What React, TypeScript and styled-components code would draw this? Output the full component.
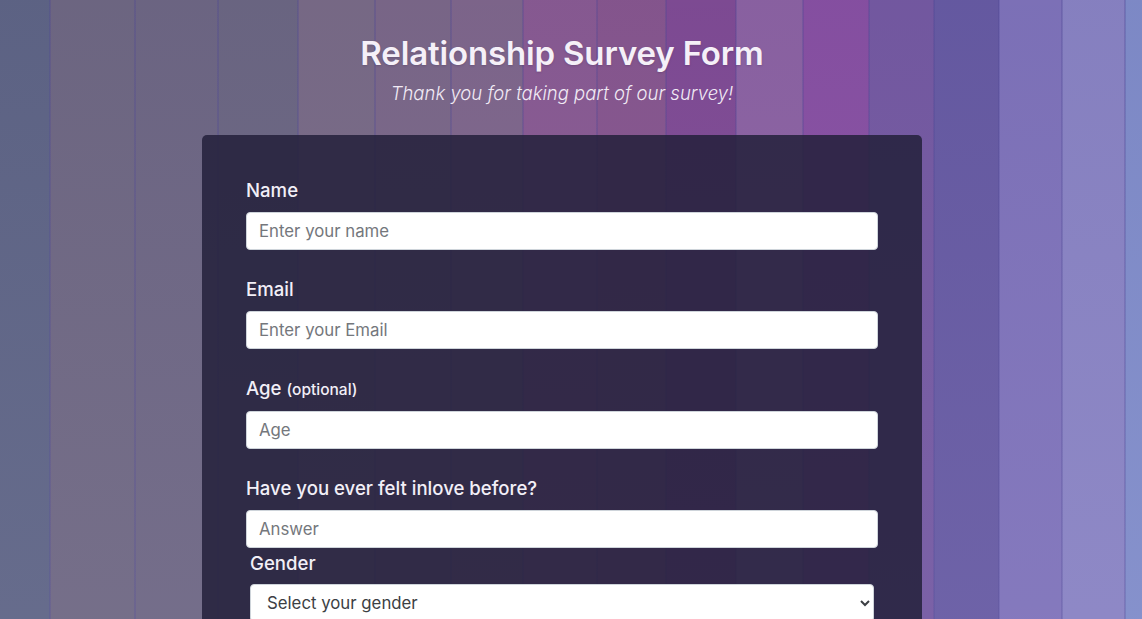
import React from "react";
import styled, { createGlobalStyle } from "styled-components";

const stripes: [number, string][] = [
  [50, "#5e6486"],
  [135, "#6e6783"],
  [218, "#6d6684"],
  [298, "#6b6683"],
  [375, "#786a87"],
  [451, "#7a6789"],
  [523, "#7e668c"],
  [597, "#885a93"],
  [666, "#86568f"],
  [736, "#7f4b95"],
  [803, "#8b62a3"],
  [869, "#8750a3"],
  [934, "#7459a2"],
  [999, "#665aa3"],
  [1062, "#7e72ba"],
  [1125, "#8882c3"],
  [1142, "#7f8bc9"],
];

const stripeGradient = (() => {
  let prev = 0;
  const stops = stripes.map(([end, color]) => {
    const s = `${color} ${prev}px ${end}px`;
    prev = end;
    return s;
  });
  return `linear-gradient(90deg, ${stops.join(", ")})`;
})();

const lineGradient = (() => {
  let prev = 0;
  const stops: string[] = [];
  stripes.slice(0, -1).forEach(([end]) => {
    stops.push(`transparent ${prev}px ${end - 1}px`);
    stops.push(`rgba(78, 70, 150, 0.3) ${end - 1}px ${end + 1}px`);
    prev = end + 1;
  });
  stops.push(`transparent ${prev}px 1142px`);
  return `linear-gradient(90deg, ${stops.join(", ")})`;
})();

const GlobalStyle = createGlobalStyle`
  * { box-sizing: border-box; }
  html, body { margin: 0; padding: 0; }
  body {
    font-family: Inter, "Open Sans", sans-serif;
    background: #6d6684;
  }
`;

const Page = styled.div`
  min-height: 100vh;
  padding: 0 18px 60px 0;
  background:
    linear-gradient(180deg, rgba(0, 0, 0, 0.02) 0%, rgba(255, 255, 255, 0.05) 100%),
    ${lineGradient},
    ${stripeGradient};
  background-attachment: fixed;
`;

const Header = styled.header`
  display: flex;
  flex-direction: column;
  align-items: center;
  padding-top: 30px;
`;

const Title = styled.h1`
  margin: 0;
  font-family: Inter, sans-serif;
  font-weight: 600;
  font-size: 33px;
  letter-spacing: -0.15px;
  line-height: 46px;
  color: #f5f0f8;
  text-shadow: 0 1px 2px rgba(60, 40, 80, 0.25);
`;

const Subtitle = styled.p`
  margin: 3px 0 0;
  font-family: Inter, sans-serif;
  font-weight: 300;
  font-style: italic;
  font-size: 18.5px;
  line-height: 28px;
  color: #f1eaf5;
`;

const Card = styled.form`
  width: 720px;
  margin: 28px auto 0;
  padding: 42px 44px 40px;
  border-radius: 5px;
  background: rgba(36, 33, 59, 0.86);
`;

const Group = styled.div<{ $tight?: boolean; $inset?: boolean }>`
  display: flex;
  flex-direction: column;
  margin-bottom: ${(p) => (p.$tight ? "0" : "26px")};
  padding: ${(p) => (p.$inset ? "2px 4px 0" : "0")};
`;

const Label = styled.label<{ $mb?: number }>`
  font-family: Inter, sans-serif;
  font-size: 18.6px;
  font-weight: 500;
  line-height: 27px;
  color: #f2eff7;
  margin-bottom: ${(p) => p.$mb ?? 8}px;
`;

const Optional = styled.span`
  font-size: 15.5px;
  font-weight: 500;
`;

const Input = styled.input`
  width: 100%;
  height: 38px;
  padding: 6px 12px;
  border: 1px solid #ced4da;
  border-radius: 4px;
  background: #fff;
  font-family: Inter, sans-serif;
  font-size: 16.8px;
  color: #495057;
  outline: none;
  &::placeholder {
    color: #74777c;
  }
`;

const Select = styled.select`
  width: 100%;
  height: 38px;
  padding: 6px 12px;
  border: 1px solid #ced4da;
  border-radius: 4px;
  background: #fff;
  font-family: Inter, sans-serif;
  font-size: 16.8px;
  color: #3c3f44;
  outline: none;
`;

export default function App() {
  return (
    <>
      <GlobalStyle />
      <Page>
        <Header>
          <Title>Relationship Survey Form</Title>
          <Subtitle>Thank you for taking part of our survey!</Subtitle>
        </Header>
        <Card onSubmit={(e) => e.preventDefault()}>
          <Group>
            <Label htmlFor="name">Name</Label>
            <Input id="name" type="text" placeholder="Enter your name" />
          </Group>
          <Group>
            <Label htmlFor="email">Email</Label>
            <Input id="email" type="email" placeholder="Enter your Email" />
          </Group>
          <Group>
            <Label htmlFor="age">
              Age <Optional>(optional)</Optional>
            </Label>
            <Input id="age" type="number" placeholder="Age" />
          </Group>
          <Group $tight>
            <Label htmlFor="love">Have you ever felt inlove before?</Label>
            <Input id="love" type="text" placeholder="Answer" />
          </Group>
          <Group $inset>
            <Label htmlFor="gender" $mb={7}>
              Gender
            </Label>
            <Select id="gender" defaultValue="">
              <option value="" disabled>
                Select your gender
              </option>
              <option value="male">Male</option>
              <option value="female">Female</option>
              <option value="other">Other</option>
            </Select>
          </Group>
        </Card>
      </Page>
    </>
  );
}
